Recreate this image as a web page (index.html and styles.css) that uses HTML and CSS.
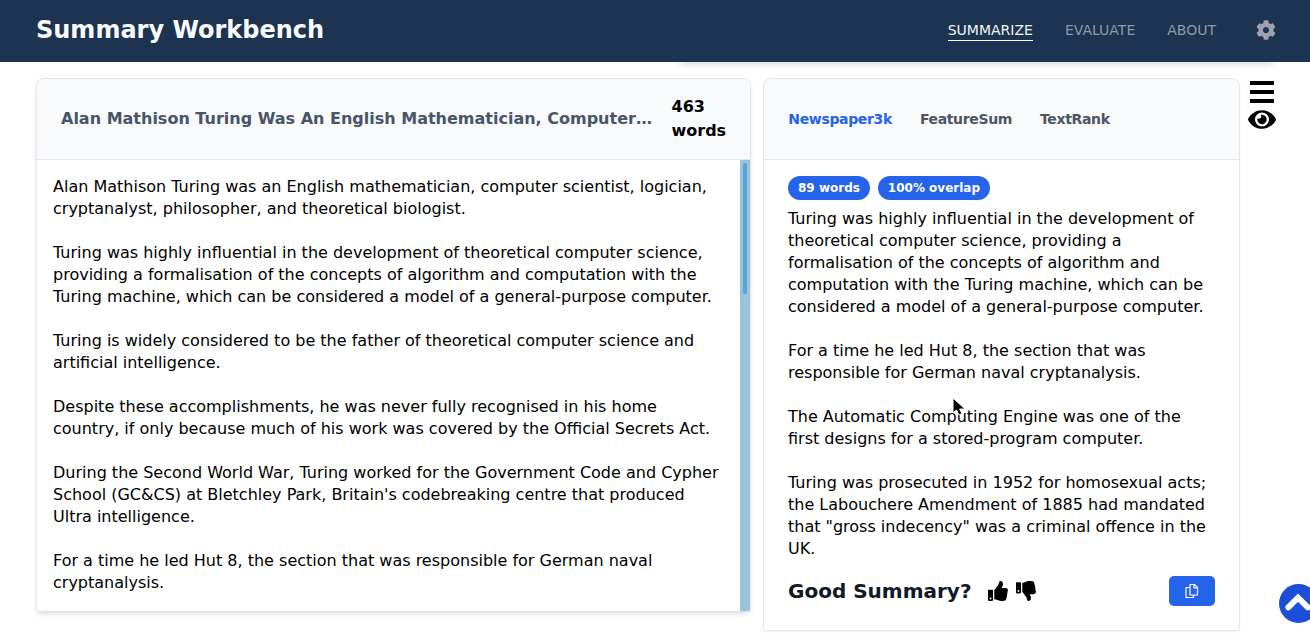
FILE: index.html
```html
<!DOCTYPE html>
<html lang="en">
<head>
<meta charset="utf-8">
<title>Summary Workbench</title>
<link rel="stylesheet" href="styles.css">
</head>
<body>
<header class="navbar">
  <h1 class="brand">Summary Workbench</h1>
  <nav class="nav">
    <a class="nav-link active">SUMMARIZE</a>
    <a class="nav-link">EVALUATE</a>
    <a class="nav-link">ABOUT</a>
    <svg class="gear" viewBox="0 0 512 512"><path fill="currentColor" d="M487.400 315.700l-42.600-24.600c4.300-23.200 4.300-47 0-70.200l42.600-24.600c4.900-2.800 7.100-8.600 5.500-14-11.100-35.600-30-67.800-54.700-94.600-3.800-4.100-10-5.100-14.800-2.300L380.800 110c-17.900-15.400-38.500-27.300-60.800-35.100V25.800c0-5.600-3.900-10.500-9.400-11.700-36.700-8.200-74.300-7.800-109.200 0-5.500 1.200-9.400 6.100-9.400 11.700V75c-22.200 7.900-42.800 19.800-60.800 35.100L88.700 85.500c-4.900-2.800-11-1.900-14.800 2.300-24.700 26.700-43.600 58.900-54.700 94.600-1.700 5.400.6 11.200 5.500 14L67.300 221c-4.300 23.200-4.300 47 0 70.200l-42.600 24.600c-4.900 2.800-7.100 8.600-5.500 14 11.100 35.600 30 67.800 54.700 94.600 3.800 4.100 10 5.100 14.800 2.300l42.600-24.600c17.900 15.400 38.500 27.300 60.800 35.100v49.200c0 5.600 3.900 10.500 9.400 11.700 36.700 8.200 74.300 7.800 109.200 0 5.500-1.200 9.400-6.100 9.400-11.700v-49.200c22.200-7.900 42.800-19.800 60.800-35.100l42.600 24.600c4.900 2.800 11 1.900 14.800-2.300 24.700-26.700 43.600-58.900 54.700-94.600 1.500-5.500-.7-11.300-5.600-14.100zM256 336c-44.100 0-80-35.900-80-80s35.900-80 80-80 80 35.900 80 80-35.900 80-80 80z"/></svg>
  </nav>
</header>
<div class="toolbar-shadow"></div>
<main class="workspace">
  <section class="card document">
    <div class="card-head">
      <h2 class="doc-title">Alan Mathison Turing Was An English Mathematician, Computer…</h2>
      <span class="word-count">463 words</span>
    </div>
    <div class="doc-body">
      <div class="doc-text">
        <p>Alan Mathison Turing was an English mathematician, computer scientist, logician,<br>cryptanalyst, philosopher, and theoretical biologist.</p>
        <p>Turing was highly influential in the development of theoretical computer science,<br>providing a formalisation of the concepts of algorithm and computation with the<br>Turing machine, which can be considered a model of a general-purpose computer.</p>
        <p>Turing is widely considered to be the father of theoretical computer science and<br>artificial intelligence.</p>
        <p>Despite these accomplishments, he was never fully recognised in his home<br>country, if only because much of his work was covered by the Official Secrets Act.</p>
        <p>During the Second World War, Turing worked for the Government Code and Cypher<br>School (GC&amp;CS) at Bletchley Park, Britain's codebreaking centre that produced<br>Ultra intelligence.</p>
        <p>For a time he led Hut 8, the section that was responsible for German naval<br>cryptanalysis.</p>
      </div>
      <div class="scroll-track"><div class="scroll-thumb"></div></div>
    </div>
  </section>
  <section class="card summary">
    <div class="card-head tabs">
      <a class="tab selected">Newspaper3k</a>
      <a class="tab">FeatureSum</a>
      <a class="tab">TextRank</a>
    </div>
    <div class="summary-body">
      <div class="badges"><span class="badge">89 words</span><span class="badge">100% overlap</span></div>
      <div class="summary-text">
        <p>Turing was highly influential in the development of<br>theoretical computer science, providing a<br>formalisation of the concepts of algorithm and<br>computation with the Turing machine, which can be<br>considered a model of a general-purpose computer.</p>
        <p>For a time he led Hut 8, the section that was<br>responsible for German naval cryptanalysis.</p>
        <p>The Automatic Computing Engine was one of the<br>first designs for a stored-program computer.</p>
        <p>Turing was prosecuted in 1952 for homosexual acts;<br>the Labouchere Amendment of 1885 had mandated<br>that "gross indecency" was a criminal offence in the<br>UK.</p>
      </div>
      <div class="feedback">
        <h3 class="question">Good Summary?</h3>
        <svg class="thumb" viewBox="0 0 512 512"><path d="M104 224H24c-13.255 0-24 10.745-24 24v240c0 13.255 10.745 24 24 24h80c13.255 0 24-10.745 24-24V248c0-13.255-10.745-24-24-24zM64 472c-13.255 0-24-10.745-24-24s10.745-24 24-24 24 10.745 24 24-10.745 24-24 24zM384 81.452c0 42.416-25.970 66.208-33.277 94.548h101.723c33.397 0 59.397 27.746 59.553 58.098.084 17.938-7.546 37.249-19.439 49.197l-.11.110c9.836 23.337 8.237 56.037-9.308 79.469 8.681 25.895-.069 57.704-16.382 74.757 4.298 17.598 2.244 32.575-6.148 44.632C440.202 511.587 389.616 512 346.839 512l-2.845-.001c-48.287-.017-87.806-17.598-119.560-31.725-15.957-7.099-36.821-15.887-52.651-16.178-6.540-.120-11.783-5.457-11.783-11.998v-213.770c0-3.200 1.282-6.271 3.558-8.521 39.614-39.144 56.648-80.587 89.117-113.111 14.804-14.832 20.188-37.236 25.393-58.902C282.515 39.293 291.817 0 312 0c24 0 72 8 72 81.452z"/></svg>
        <svg class="thumb" viewBox="0 0 512 512"><path d="M0 56v240c0 13.255 10.745 24 24 24h80c13.255 0 24-10.745 24-24V56c0-13.255-10.745-24-24-24H24C10.745 32 0 42.745 0 56zm40 200c0-13.255 10.745-24 24-24s24 10.745 24 24-10.745 24-24 24-24-10.745-24-24zm272 256c-20.183 0-29.485-39.293-33.931-57.795-5.206-21.666-10.589-44.070-25.393-58.902-32.469-32.524-49.503-73.967-89.117-113.111a11.980 11.980 0 0 1-3.558-8.521V59.901c0-6.541 5.243-11.878 11.783-11.998 15.831-.290 36.694-9.079 52.651-16.178C256.189 17.598 295.709.017 343.995 0h2.844c42.777 0 93.363.413 113.774 29.737 8.392 12.057 10.446 27.034 6.148 44.632 16.312 17.053 25.063 48.863 16.382 74.757 17.544 23.432 19.143 56.132 9.308 79.469l.110.110c11.893 11.949 19.523 31.259 19.439 49.197-.156 30.352-26.157 58.098-59.553 58.098H350.723C358.030 364.340 384 388.132 384 430.548 384 504 336 512 312 512z"/></svg>
        <button class="copy" aria-label="Copy"><svg viewBox="0 0 16 16" fill="none" stroke="currentColor" stroke-width="1.200"><path d="M6 1.500h4.500l3 3v7.500H6zM10 1.500V5h3.500M6 4.500H2v10h7.500V12"/></svg></button>
      </div>
    </div>
  </section>
  <aside class="side-tools">
    <svg class="menu" viewBox="0 0 26 22"><path d="M1 0h24v4H1zM1 9h24v4H1zM1 18h24v4H1z"/></svg>
    <svg class="eye" viewBox="0 0 576 384"><path fill-rule="evenodd" d="M572.500 177.400C518.300 71.600 410.900 0 288 0S57.700 71.600 3.500 177.400a32.400 32.400 0 0 0 0 29.200C57.700 312.400 165.100 384 288 384s230.300-71.600 284.500-177.400a32.400 32.400 0 0 0 0-29.200zM288 336a144 144 0 1 1 144-144 143.900 143.900 0 0 1-144 144zm0-240a95.300 95.300 0 0 0-25.300 3.800 47.900 47.900 0 0 1-66.900 66.900A95.800 95.800 0 1 0 288 96z"/></svg>
  </aside>
</main>
<div class="to-top"><svg viewBox="0 0 40 40"><path d="M9.500 24L19.500 14 29.500 24"/></svg></div>
<svg class="cursor" viewBox="0 0 14 20"><path d="M1 1v15l3.500-3 2.500 5 3-1.500-2.500-4.500H13z"/></svg>
</body>
</html>
```
FILE: styles.css
```css
* { box-sizing: border-box; }
body {
  margin: 0;
  height: 641px;
  overflow: hidden;
  background: #fff;
  color: #000;
  font: 16px/22px "DejaVu Sans", sans-serif;
}
h1, h2, h3, p { margin: 0; }
svg { display: block; flex: none; }

.navbar {
  position: relative;
  z-index: 1;
  height: 62px;
  padding: 0 34px 2px 36px;
  display: flex;
  align-items: center;
  justify-content: space-between;
  background: #1c3451;
  border-bottom: 1px solid #17304e;
}
.brand { color: #f8fafc; font-size: 24px; line-height: 32px; }
.nav { display: flex; align-items: center; gap: 32px; }
.nav-link {
  padding-top: 1px;
  font-size: 14px;
  line-height: 20px;
  color: #8e99a9;
  border-bottom: 1px solid transparent;
}
.nav-link.active { color: #f3f4f6; border-color: #fff; }
.gear { width: 20px; height: 20px; margin-left: 8px; color: #9ca3af; }

.toolbar-shadow {
  height: 4px;
  margin: -4px 36px 0 679px;
  border-radius: 8px;
  box-shadow: 0 2px 6px rgba(0, 0, 0, .2);
}

.workspace {
  display: flex;
  align-items: flex-start;
  padding: 16px 0 0 36px;
}
.card {
  border: 1px solid #e5e7eb;
  border-radius: 8px;
  background: #fff;
  display: flex;
  flex-direction: column;
}
.document {
  width: 715px;
  height: 533px;
  margin-right: 12px;
  border-bottom: 0;
  border-radius: 8px 8px 4px 4px;
  box-shadow: 0 4px 6px -1px rgba(0, 0, 0, .11), 0 2px 4px -2px rgba(0, 0, 0, .11);
}
.summary {
  width: 477px;
  height: 553px;
  border-radius: 8px 8px 2px 2px;
  box-shadow: 0 1px 2px rgba(0, 0, 0, .05);
}
.card-head {
  flex: none;
  height: 81px;
  padding: 0 24px;
  display: flex;
  align-items: center;
  background: #f9fafc;
  border-bottom: 1px solid #e5e7eb;
  border-radius: 8px 8px 0 0;
}
.doc-title {
  flex: none;
  width: 593px;
  white-space: nowrap;
  color: #475569;
  font-size: 16px;
  line-height: 24px;
}
.word-count { flex: none; width: 56px; margin-left: 17.500px; font-weight: 700; line-height: 24px; }
.doc-body { flex: 1; min-height: 0; display: flex; justify-content: space-between; }
.doc-text {
  padding: 16px 0 0 16px;
  display: flex;
  flex-direction: column;
  gap: 22px;
  white-space: nowrap;
}
.scroll-track { width: 10px; padding: 3px; background: #9ac2d8; }
.scroll-thumb { width: 4px; height: 131px; border-radius: 2px; background: #57a6d2; }

.tabs { gap: 28px; padding-left: 24.300px; }
.tab {
  color: #4b5563;
  font-size: 14px;
  font-weight: 700;
  line-height: 20px;
  letter-spacing: -.025em;
}
.tab.selected { color: #2563eb; }
.summary-body { padding: 16px 24px 0; }
.badges { display: flex; gap: 8px; margin-bottom: 8px; }
.badge {
  height: 24px;
  padding: 0 10px;
  border-radius: 12px;
  background: #2563eb;
  color: #fff;
  font-size: 12px;
  font-weight: 700;
  line-height: 24px;
}
.summary-text { display: flex; flex-direction: column; gap: 22px; white-space: nowrap; }
.feedback { display: flex; align-items: center; margin-top: 16px; height: 30px; }
.question { margin-right: 16px; color: #111827; font-size: 20px; line-height: 28px; }
.thumb { width: 20px; height: 20px; margin-right: 8px; }
.copy {
  width: 46px;
  height: 30px;
  margin-left: auto;
  padding: 0;
  display: flex;
  align-items: center;
  justify-content: center;
  border: 0;
  border-radius: 5px;
  background: #2563eb;
  color: #fff;
}
.copy svg { width: 16px; height: 16px; }

.side-tools { display: flex; flex-direction: column; gap: 7px; padding: 3px 0 0 8px; }
.menu { width: 26px; height: 22px; margin-left: 1px; }
.eye { width: 28px; height: 19px; }

.to-top {
  position: absolute;
  left: 1279px;
  top: 583.500px;
  width: 39px;
  height: 39px;
  border-radius: 50%;
  background: #1d4ed8;
}
.to-top path { fill: none; stroke: #fff; stroke-width: 6; stroke-linecap: round; }
.cursor { position: absolute; left: 952px; top: 397px; width: 14px; height: 20px; }
.cursor path { stroke: #fff; stroke-width: 1; }
```
